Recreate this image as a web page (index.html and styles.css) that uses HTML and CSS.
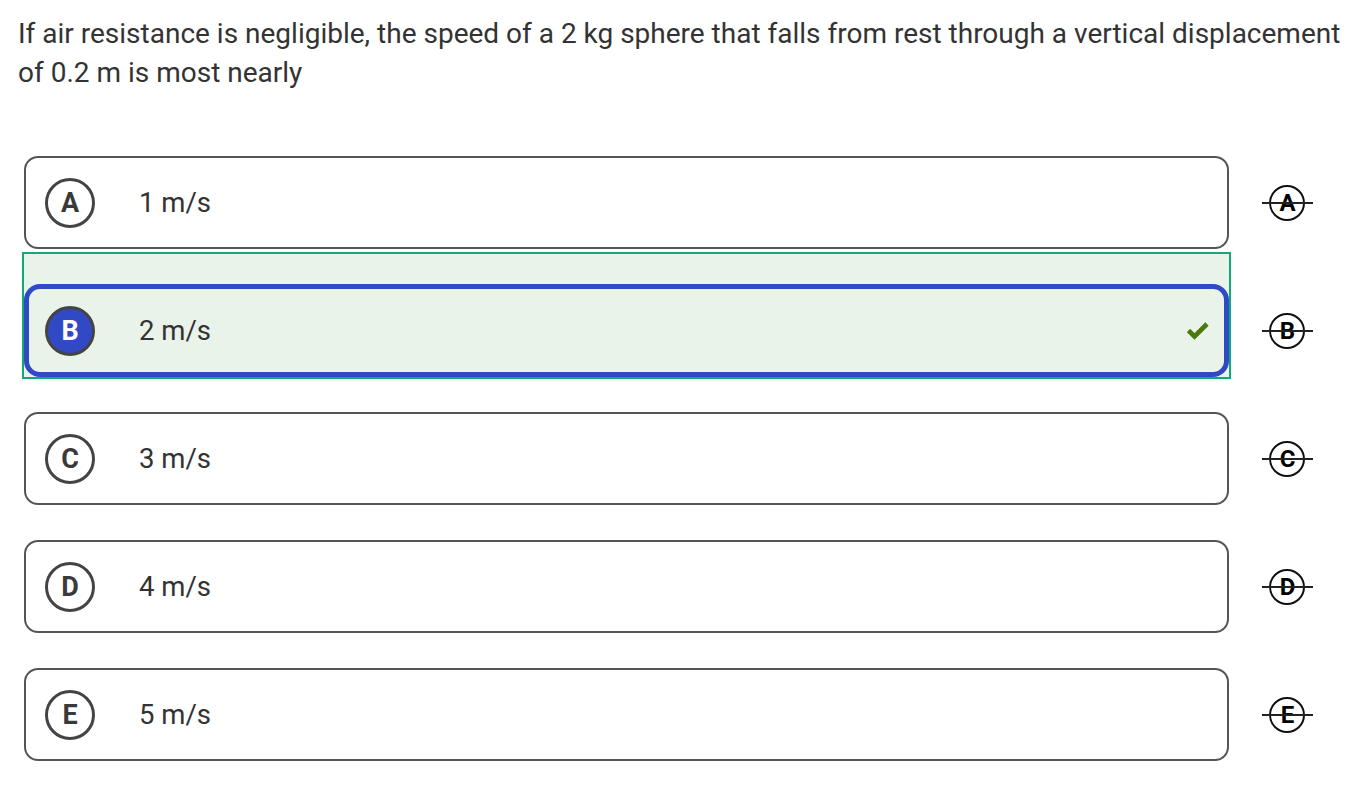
FILE: index.html
```html
<!DOCTYPE html>
<html lang="en">
<head>
<meta charset="utf-8">
<title>Question</title>
<link rel="stylesheet" href="styles.css">
</head>
<body>
<div class="question">If air resistance is negligible, the speed of a 2 kg sphere that falls from rest through a vertical displacement of 0.2 m is most nearly</div>
<div class="options">
  <div class="row">
    <div class="opt"><span class="letter">A</span><span class="text">1 m/s</span></div>
    <div class="mark"><span>A</span></div>
  </div>
  <div class="row">
    <div class="sel-wrap">
      <div class="opt selected"><span class="letter">B</span><span class="text">2 m/s</span>
        <svg class="check" width="24" height="20" viewBox="0 0 24 20"><polyline points="2.5,9.5 8.5,15.5 21,3" fill="none" stroke="#4a7a0b" stroke-width="4.6"/></svg>
      </div>
    </div>
    <div class="mark"><span>B</span></div>
  </div>
  <div class="row">
    <div class="opt"><span class="letter">C</span><span class="text">3 m/s</span></div>
    <div class="mark"><span>C</span></div>
  </div>
  <div class="row">
    <div class="opt"><span class="letter">D</span><span class="text">4 m/s</span></div>
    <div class="mark"><span>D</span></div>
  </div>
  <div class="row">
    <div class="opt"><span class="letter">E</span><span class="text">5 m/s</span></div>
    <div class="mark"><span>E</span></div>
  </div>
</div>
</body>
</html>
```
FILE: styles.css
```css
body {
  margin: 0;
  font-family: Roboto, "Liberation Sans", sans-serif;
  color: #333;
  background: #fff;
}
.question {
  margin: 14px 18px 0 18px;
  font-size: 28px;
  line-height: 39px;
  color: #333;
}
.options {
  margin: 64px 0 0 24px;
}
.row {
  display: flex;
  align-items: center;
  margin-bottom: 35px;
}
.opt {
  width: 1205px;
  height: 93px;
  box-sizing: border-box;
  border: 2px solid #555;
  border-radius: 14px;
  display: flex;
  align-items: center;
  padding-left: 19px;
  padding-right: 16px;
  background: #fff;
}
.sel-wrap {
  border: 2px solid #13a77c;
  background: #e9f3ea;
  margin: -32px -2px -2px -2px;
  padding-top: 30px;
}
.opt.selected {
  border: 5px solid #3249c5;
  border-radius: 16px;
  padding-left: 16px;
  padding-right: 14px;
  background: #e9f3ea;
}
.letter {
  width: 50px;
  height: 50px;
  box-sizing: border-box;
  border: 3px solid #444;
  border-radius: 50%;
  display: flex;
  align-items: center;
  justify-content: center;
  font-size: 27px;
  font-weight: 700;
  color: #3a3a3a;
}
.selected .letter {
  background: #3249c5;
  color: #fff;
}
.text {
  margin-left: 44px;
  font-size: 27.5px;
  color: #333;
}
.check {
  margin-left: auto;
}
.mark {
  margin-left: 33px;
  width: 51px;
  height: 36px;
  position: relative;
  display: flex;
  align-items: center;
  justify-content: center;
  font-size: 24px;
  font-weight: 700;
  color: #000;
}
.mark::before {
  content: "";
  position: absolute;
  left: 7px;
  top: 0;
  width: 36px;
  height: 36px;
  box-sizing: border-box;
  border: 2px solid #111;
  border-radius: 50%;
}
.mark::after {
  content: "";
  position: absolute;
  left: 0;
  right: 0;
  top: 17px;
  height: 2px;
  background: #222;
}
```
